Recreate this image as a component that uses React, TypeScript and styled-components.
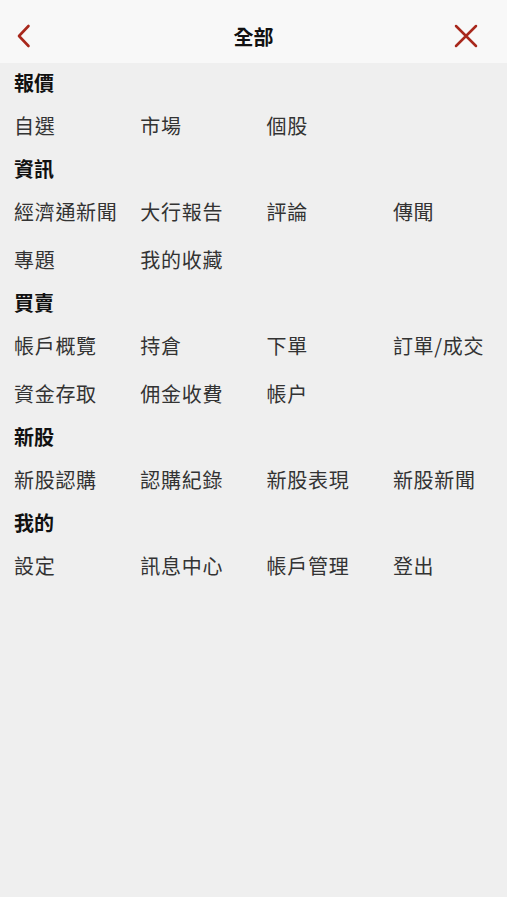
import React from 'react'
import styled, { createGlobalStyle } from 'styled-components'

const GlobalStyle = createGlobalStyle`
  html, body {
    margin: 0;
    padding: 0;
    background: #ffffff;
  }
  body {
    font-family: 'Noto Sans CJK TC', 'Noto Sans', sans-serif;
  }
`

const Page = styled.div`
  width: 507px;
  min-height: 897px;
  background: #efefef;
  display: flex;
  flex-direction: column;
`

const Header = styled.header`
  height: 63px;
  box-sizing: border-box;
  padding: 9px 0 0;
  background: #f8f8f8;
  display: grid;
  grid-template-columns: 80px 1fr 80px;
  align-items: center;
`

const IconButton = styled.button<{ $side: 'left' | 'right' }>`
  border: 0;
  background: none;
  padding: ${(p) => (p.$side === 'left' ? '0 0 0 16px' : '0 29px 0 0')};
  height: 54px;
  display: flex;
  align-items: center;
  justify-content: ${(p) => (p.$side === 'left' ? 'flex-start' : 'flex-end')};
  cursor: pointer;
`

const Title = styled.h1`
  margin: 0;
  text-align: center;
  font-size: 20px;
  font-weight: 700;
  color: #111;
`

const Section = styled.section`
  display: flex;
  flex-direction: column;
`

const SectionTitle = styled.h2`
  margin: 0;
  height: 38px;
  padding-left: 14px;
  display: flex;
  align-items: center;
  font-size: 20px;
  font-weight: 700;
  color: #111;
`

const Grid = styled.div`
  display: grid;
  grid-template-columns: repeat(4, 126.3px);
  grid-auto-rows: 48px;
  padding-left: 14px;
`

const Item = styled.a`
  display: flex;
  align-items: center;
  font-size: 20px;
  letter-spacing: 0.7px;
  color: #333;
  text-decoration: none;
  white-space: nowrap;
`

const sections: { title: string; items: string[] }[] = [
  { title: '報價', items: ['自選', '市場', '個股'] },
  { title: '資訊', items: ['經濟通新聞', '大行報告', '評論', '傳聞', '專題', '我的收藏'] },
  { title: '買賣', items: ['帳戶概覽', '持倉', '下單', '訂單/成交', '資金存取', '佣金收費', '帳户'] },
  { title: '新股', items: ['新股認購', '認購紀錄', '新股表現', '新股新聞'] },
  { title: '我的', items: ['設定', '訊息中心', '帳戶管理', '登出'] },
]

const RED = '#a8281c'

const App: React.FC = () => {
  return (
    <Page>
      <GlobalStyle />
      <Header>
        <IconButton $side='left' aria-label='back'>
          <svg width='15' height='24' viewBox='0 0 15 24'>
            <path d='M12.5 2 L3 12 L12.5 22' fill='none' stroke={RED} strokeWidth='2.6' strokeLinecap='round' strokeLinejoin='round' />
          </svg>
        </IconButton>
        <Title>全部</Title>
        <IconButton $side='right' aria-label='close'>
          <svg width='24' height='24' viewBox='0 0 24 24'>
            <path d='M2 2 L22 22 M22 2 L2 22' fill='none' stroke={RED} strokeWidth='2.5' strokeLinecap='round' />
          </svg>
        </IconButton>
      </Header>
      {sections.map((s) => (
        <Section key={s.title}>
          <SectionTitle>{s.title}</SectionTitle>
          <Grid>
            {s.items.map((it) => (
              <Item key={it}>{it}</Item>
            ))}
          </Grid>
        </Section>
      ))}
    </Page>
  )
}

export default App
